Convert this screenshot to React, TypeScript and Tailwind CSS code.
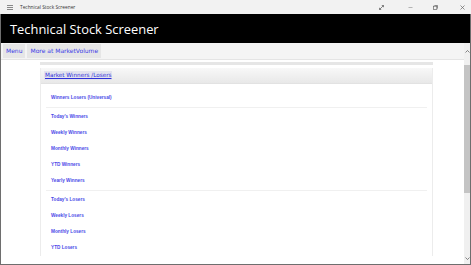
import React from "react";

const winners = ["Today's Winners", "Weekly Winners", "Monthly Winners", "YTD Winners", "Yearly Winners"];
const losers = ["Today's Losers", "Weekly Losers", "Monthly Losers", "YTD Losers"];

function Item({ label }: { label: string }) {
  return (
    <div className="h-[16px] flex items-center pl-[10px]">
      <a className="text-[4.7px] font-bold text-[#4a4ae8] leading-none cursor-pointer font-['Liberation_Sans',sans-serif]">{label}</a>
    </div>
  );
}

function Sep() {
  return <div className="h-px mt-px mb-px ml-[5px] mr-[5px] bg-[#f0f0f0]" />;
}

export default function App() {
  return (
    <div className="w-[471px] h-[265px] overflow-hidden flex flex-col bg-white font-['DejaVu_Sans',sans-serif]">
      {/* title bar */}
      <div className="h-[14px] bg-[#f2f2f2] flex items-center shrink-0">
        <div className="w-[20px] flex items-center justify-center">
          <svg width="6" height="5" viewBox="0 0 6 5">
            <rect x="0" y="0" width="6" height="1" fill="#888" />
            <rect x="0" y="2" width="6" height="1" fill="#888" />
            <rect x="0" y="4" width="6" height="1" fill="#888" />
          </svg>
        </div>
        <span className="text-[4.8px] text-[#333] font-['Open_Sans',sans-serif] leading-none">Technical Stock Screener</span>
        <div className="flex-1" />
        <div className="flex items-center gap-[9px] pr-[6px]">
          <svg width="5" height="5" viewBox="0 0 5 5">
            <path d="M0.5 4.5 L4.5 0.5" stroke="#666" strokeWidth="0.8" />
            <path d="M2.8 0.5 H4.5 V2.2" stroke="#666" strokeWidth="0.8" fill="none" />
            <path d="M0.5 2.8 V4.5 H2.2" stroke="#666" strokeWidth="0.8" fill="none" />
          </svg>
          <div className="w-[6px]" />
          <svg width="5" height="5" viewBox="0 0 5 5">
            <path d="M0.5 2.5 H4.5" stroke="#999" strokeWidth="0.7" />
          </svg>
          <div className="w-[2px]" />
          <svg width="5" height="5" viewBox="0 0 5 5">
            <rect x="0.5" y="1.2" width="3.3" height="3.3" stroke="#666" strokeWidth="0.7" fill="none" />
            <path d="M1.4 0.5 H4.5 V3.6" stroke="#666" strokeWidth="0.7" fill="none" />
          </svg>
          <div className="w-[4px]" />
          <svg width="5" height="5" viewBox="0 0 5 5">
            <path d="M0.5 0.5 L4.5 4.5 M4.5 0.5 L0.5 4.5" stroke="#666" strokeWidth="0.7" />
          </svg>
        </div>
      </div>
      {/* frame */}
      <div className="flex-1 flex flex-col border-x border-b border-[#6e6e6e] min-h-0">
        {/* header */}
        <div className="h-[29px] bg-black flex items-center pl-[9px] shrink-0">
          <span className="text-white text-[12.9px] font-['Open_Sans',sans-serif] leading-none pt-[2px]">Technical Stock Screener</span>
        </div>
        <div className="flex-1 flex min-h-0">
          {/* content */}
          <div className="flex-1 flex flex-col min-w-0">
            <div className="h-[17px] bg-[#f4f4f4] border-b border-[#e4e4e4] flex items-center pl-[2px] gap-[2px] shrink-0">
              <button className="h-[14px] px-[3px] bg-[#e6e6e6] text-[#3c3ce6] text-[6px] font-medium leading-none font-['DejaVu_Sans',sans-serif]">Menu</button>
              <button className="h-[14px] px-[3px] bg-[#e6e6e6] text-[#3c3ce6] text-[6px] font-medium leading-none font-['DejaVu_Sans',sans-serif]">More at MarketVolume</button>
            </div>
            <div className="pl-[39px] pr-[31px]">
              <div className="h-[3px] mt-[2px] bg-[#e6e6e6]" />
              <div className="mt-[3px] border-x border-[#ececec]">
                <div className="h-[16px] bg-gradient-to-b from-[#f8f8f8] to-[#e8e8e8] border-b border-[#e2e2e2] flex items-center pl-[3px]">
                  <a className="px-[1px] h-[9px] flex items-center bg-[#e2e2ee] text-[#3030d8] text-[5.7px] underline leading-none">Market Winners /Losers</a>
                </div>
                <div className="pt-[6px]">
                  <Item label="Winners Losers (Universal)" />
                  <Sep />
                  {winners.map((w) => (
                    <Item key={w} label={w} />
                  ))}
                  <Sep />
                  {losers.map((w) => (
                    <Item key={w} label={w} />
                  ))}
                </div>
              </div>
            </div>
          </div>
          {/* scrollbar */}
          <div className="w-[6px] bg-[#f0f0f0] flex flex-col items-center shrink-0">
            <div className="h-[22px] flex items-center justify-center pb-[6px]">
              <svg width="5" height="3" viewBox="0 0 5 3">
                <path d="M0.5 2.5 L2.5 0.5 L4.5 2.5" stroke="#555" strokeWidth="0.7" fill="none" />
              </svg>
            </div>
            <div className="w-[6px] h-[128px] bg-[#c4c4c4]" />
            <div className="flex-1" />
            <div className="h-[12px] flex items-center justify-center">
              <svg width="5" height="3" viewBox="0 0 5 3">
                <path d="M0.5 0.5 L2.5 2.5 L4.5 0.5" stroke="#555" strokeWidth="0.7" fill="none" />
              </svg>
            </div>
          </div>
        </div>
      </div>
    </div>
  );
}
